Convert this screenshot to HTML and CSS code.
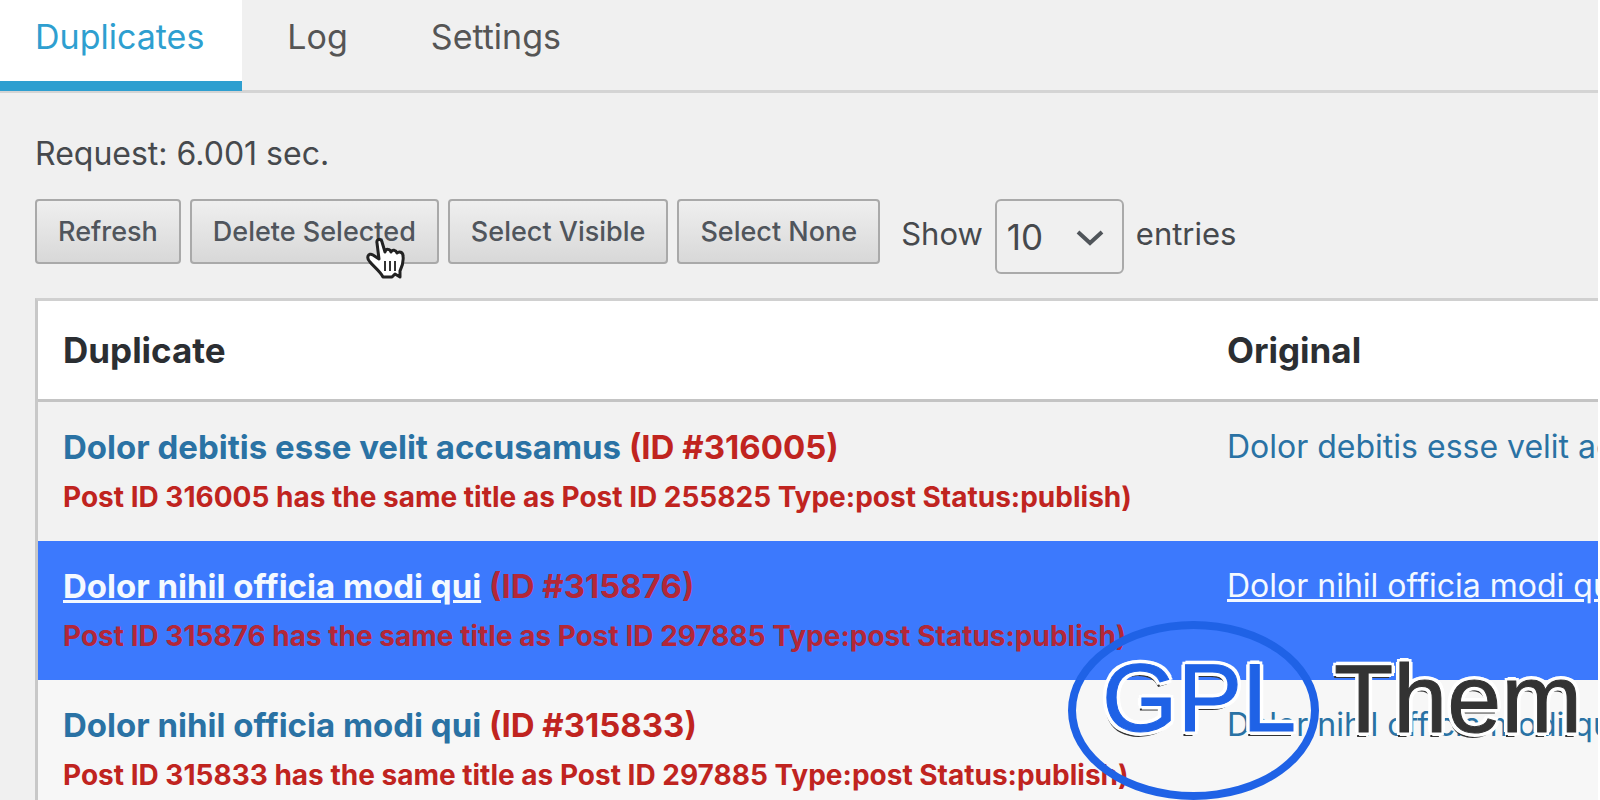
FILE: index.html
```
<!DOCTYPE html>
<html lang="en">
  <head>
    <meta charset="UTF-8" />
    <title>Duplicates</title>
    <link rel="stylesheet" href="styles.css">
  </head>
  <body>
    <nav class="tabs">
      <a class="tab active" href="#">Duplicates</a>
      <a class="tab" href="#">Log</a>
      <a class="tab" href="#">Settings</a>
    </nav>

    <main class="content">
      <p class="request">Request: 6.001 sec.</p>

      <div class="toolbar">
        <button class="btn" type="button">Refresh</button>
        <div class="btn-wrap">
          <button class="btn" type="button">Delete Selected</button>
          <svg class="pointer" viewBox="0 0 42 46" width="42" height="46">
            <path d="M12 7 C11 3 16 2 17 6 L20 16 C21 12 25 13 26 16 C27 13 31 14 32 17 C34 15 38 16 38 20 C39 27 37 31 35 35 L35 41 L30 38 L27 41 L18 41 C15 35 9 31 5 26 C1 22 3 16 8 19 L14 23 Z" fill="#fff" stroke="#222" stroke-width="3" stroke-linejoin="round" />
            <path d="M20 25 V35 M25 25 V35 M30 25 V35" stroke="#333" stroke-width="2" />
          </svg>
        </div>
        <button class="btn" type="button">Select Visible</button>
        <button class="btn" type="button">Select None</button>
        <div class="length">
          <label for="entries">Show</label>
          <div class="select-wrap">
            <select id="entries">
              <option>10</option>
              <option>25</option>
              <option>50</option>
            </select>
            <svg class="chevron" viewBox="0 0 28 18" width="28" height="18">
              <path d="M2 3 L14 14 L26 3" fill="none" stroke="#50555a" stroke-width="4" />
            </svg>
          </div>
          <span>entries</span>
        </div>
      </div>

      <table class="duplicates">
        <thead>
          <tr>
            <th class="col-duplicate">Duplicate</th>
            <th>Original</th>
          </tr>
        </thead>
        <tbody>
          <tr>
            <td>
              <div class="title"><a href="#">Dolor debitis esse velit accusamus</a> (ID #316005)</div>
              <div class="reason">Post ID 316005 has the same title as Post ID 255825 Type:post Status:publish)</div>
            </td>
            <td><a href="#">Dolor debitis esse velit accusamus</a></td>
          </tr>
          <tr class="selected">
            <td>
              <div class="title"><a href="#">Dolor nihil officia modi qui</a> (ID #315876)</div>
              <div class="reason">Post ID 315876 has the same title as Post ID 297885 Type:post Status:publish)</div>
            </td>
            <td><a href="#">Dolor nihil officia modi qui</a></td>
          </tr>
          <tr>
            <td>
              <div class="title"><a href="#">Dolor nihil officia modi qui</a> (ID #315833)</div>
              <div class="reason">Post ID 315833 has the same title as Post ID 297885 Type:post Status:publish)</div>
            </td>
            <td><a href="#">Dolor nihil officia modi qui</a></td>
          </tr>
        </tbody>
      </table>
    </main>

    <div class="brand">
      <span class="brand-gpl">GPL</span>
      <span class="brand-name">Them</span>
    </div>
  </body>
</html>
```
FILE: styles.css
```
* {
  box-sizing: border-box;
}

body {
  margin: 0;
  height: 100vh;
  position: relative;
  overflow: hidden;
  background: #f0f0f0;
  border-right: 2px solid #fff;
  font-family: Inter, "Liberation Sans", sans-serif;
  font-size: 32px;
  color: #46494d;
}

a {
  text-decoration: none;
}

/* tabs */
.tabs {
  display: flex;
  height: 93px;
  border-bottom: 3px solid #d4d4d4;
}

.tab {
  height: 91px;
  padding: 17px 38px 0 45px;
  border-bottom: 10px solid transparent;
  font-size: 34px;
  line-height: 40px;
  color: #555;
}

.tab.active {
  padding-left: 35px;
  background: #fff;
  color: #2e9fd0;
  border-bottom-color: #2e9fd0;
}

.content {
  overflow: hidden;
  padding-left: 35px;
}

.request {
  margin: 41px 0 25px;
  line-height: 40px;
}

/* toolbar */
.toolbar {
  display: flex;
  align-items: flex-start;
  gap: 9px;
  height: 99px;
}

.btn {
  display: block;
  height: 65px;
  padding: 0 21px;
  border: 2px solid #a9a9a9;
  border-radius: 4px;
  background: linear-gradient(#efefef, #d8d8d8);
  font-family: inherit;
  font-size: 27px;
  font-weight: 500;
  color: #50555c;
}

.btn-wrap {
  position: relative;
}

.pointer {
  position: absolute;
  left: 175px;
  top: 37px;
}

.length {
  display: flex;
  align-items: flex-start;
  gap: 12px;
  margin-left: 12px;
  font-size: 31px;
  line-height: 70px;
}

.select-wrap {
  position: relative;
  height: 75px;
}

.length select {
  display: block;
  appearance: none;
  width: 129px;
  height: 75px;
  padding: 0 10px;
  border: 2px solid #aaa;
  border-radius: 6px;
  background: transparent;
  font-family: inherit;
  font-size: 35px;
  color: #46494d;
}

.chevron {
  position: absolute;
  right: 20px;
  top: 30px;
  pointer-events: none;
}

/* table */
.duplicates {
  width: 100%;
  table-layout: fixed;
  border-collapse: separate;
  border-spacing: 0;
  border-top: 3px solid #d0d0d0;
  border-left: 3px solid #c8c8c8;
  white-space: nowrap;
}

.duplicates th {
  height: 101px;
  padding: 0 25px;
  border-bottom: 3px solid #c4c4c4;
  background: #fff;
  text-align: left;
  font-size: 35px;
  font-weight: 700;
  color: #2b2e32;
}

.col-duplicate {
  width: 1164px;
}

.duplicates td {
  height: 139px;
  padding: 21px 25px 0;
  vertical-align: top;
  line-height: 48px;
  background: #f7f7f7;
}

.duplicates tr:first-child td {
  background: #f2f2f2;
}

.duplicates td a {
  color: #2a72a4;
}

.title {
  font-size: 33px;
  font-weight: 700;
  color: #c0241f;
}

.reason {
  font-size: 28px;
  font-weight: 700;
  line-height: 52px;
  color: #c0241f;
}

.duplicates .selected td {
  background: #3c79fd;
}

.selected .title,
.selected .reason {
  color: #b32738;
}

.duplicates .selected a {
  color: #f4f9ff;
  text-decoration: underline;
}

/* watermark over the page */
.brand {
  position: absolute;
  left: 1068px;
  top: 621px;
  display: flex;
  align-items: center;
  gap: 15px;
  font: 97px/1 "Liberation Sans", Arial, sans-serif;
}

.brand span {
  -webkit-text-stroke: 1px currentColor;
  text-shadow: -4px 0 #fff, 4px 0 #fff, 0 -4px #fff, 0 4px #fff, -3px -3px #fff,
    3px -3px #fff, -3px 3px #fff, 3px 3px #fff, -2px 5px #333;
}

.brand-gpl {
  width: 251px;
  height: 179px;
  padding-left: 26px;
  border: 8px solid #1f62e6;
  border-radius: 50%;
  line-height: 138px;
  color: #1f62e6;
}

.brand-name {
  padding-bottom: 24px;
  color: #333;
}
```
